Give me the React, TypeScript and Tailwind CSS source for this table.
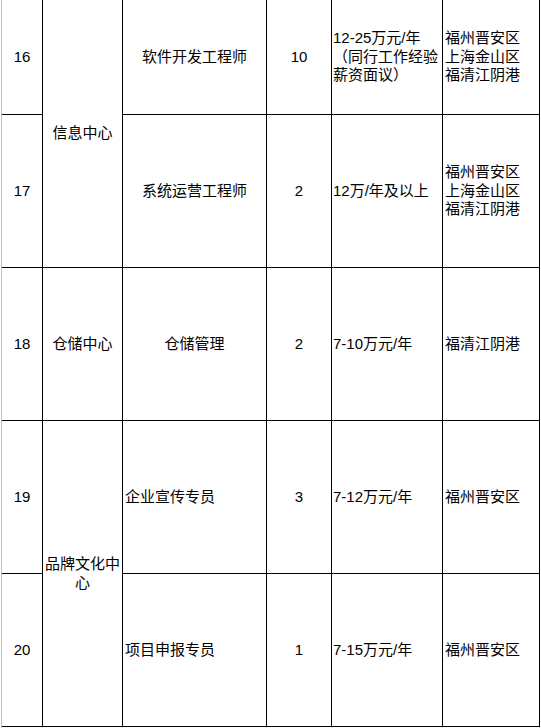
import React from "react";

const font = {
  fontFamily: '"Liberation Sans", "Noto Sans CJK SC", sans-serif',
};

function Cell({
  children,
  className = "",
}: {
  children?: React.ReactNode;
  className?: string;
}) {
  return (
    <div
      className={
        "flex items-center border-r border-b border-black text-[15px] leading-[18.5px] text-black " +
        className
      }
    >
      {children}
    </div>
  );
}

export default function App() {
  return (
    <div className="w-[541px] h-[728px] bg-white overflow-hidden" style={font}>
      <div className="ml-[1px] w-[539px] border-l border-[#c0c0c0]">
        <div className="grid grid-cols-[41px_80px_144px_65px_111px_97px] grid-rows-[115px_153px_153px_153px_153px]">
          {/* Row 16 */}
          <Cell className="justify-center col-start-1 row-start-1">16</Cell>
          <Cell className="justify-center col-start-2 row-start-1 row-span-2">信息中心</Cell>
          <Cell className="justify-center col-start-3 row-start-1">软件开发工程师</Cell>
          <Cell className="justify-center col-start-4 row-start-1">10</Cell>
          <Cell className="pl-[1px] col-start-5 row-start-1">
            <div>
              12-25万元/年
              <br />
              （同行工作经验
              <br />
              薪资面议）
            </div>
          </Cell>
          <Cell className="pl-[2px] col-start-6 row-start-1">
            <div>
              福州晋安区
              <br />
              上海金山区
              <br />
              福清江阴港
            </div>
          </Cell>

          {/* Row 17 */}
          <Cell className="justify-center col-start-1 row-start-2">17</Cell>
          <Cell className="justify-center col-start-3 row-start-2">系统运营工程师</Cell>
          <Cell className="justify-center col-start-4 row-start-2">2</Cell>
          <Cell className="pl-[1px] col-start-5 row-start-2">12万/年及以上</Cell>
          <Cell className="pl-[2px] col-start-6 row-start-2">
            <div>
              福州晋安区
              <br />
              上海金山区
              <br />
              福清江阴港
            </div>
          </Cell>

          {/* Row 18 */}
          <Cell className="justify-center col-start-1 row-start-3">18</Cell>
          <Cell className="justify-center col-start-2 row-start-3">仓储中心</Cell>
          <Cell className="justify-center col-start-3 row-start-3">仓储管理</Cell>
          <Cell className="justify-center col-start-4 row-start-3">2</Cell>
          <Cell className="pl-[1px] col-start-5 row-start-3">7-10万元/年</Cell>
          <Cell className="pl-[2px] col-start-6 row-start-3">福清江阴港</Cell>

          {/* Row 19 */}
          <Cell className="justify-center col-start-1 row-start-4">19</Cell>
          <Cell className="justify-center col-start-2 row-start-4 row-span-2">
            <div className="w-[76px] text-center break-all">品牌文化中心</div>
          </Cell>
          <Cell className="pl-[2px] col-start-3 row-start-4">企业宣传专员</Cell>
          <Cell className="justify-center col-start-4 row-start-4">3</Cell>
          <Cell className="pl-[1px] col-start-5 row-start-4">7-12万元/年</Cell>
          <Cell className="pl-[2px] col-start-6 row-start-4">福州晋安区</Cell>

          {/* Row 20 */}
          <Cell className="justify-center col-start-1 row-start-5">20</Cell>
          <Cell className="pl-[2px] col-start-3 row-start-5">项目申报专员</Cell>
          <Cell className="justify-center col-start-4 row-start-5">1</Cell>
          <Cell className="pl-[1px] col-start-5 row-start-5">7-15万元/年</Cell>
          <Cell className="pl-[2px] col-start-6 row-start-5">福州晋安区</Cell>
        </div>
        <div className="grid grid-cols-[41px_80px_144px_65px_111px_97px] h-[1px]">
          <div className="border-r border-[#d0d0d0]" />
          <div className="border-r border-[#d0d0d0]" />
          <div className="border-r border-[#d0d0d0]" />
          <div className="border-r border-[#d0d0d0]" />
          <div className="border-r border-[#d0d0d0]" />
          <div className="border-r border-[#d0d0d0]" />
        </div>
      </div>
    </div>
  );
}
